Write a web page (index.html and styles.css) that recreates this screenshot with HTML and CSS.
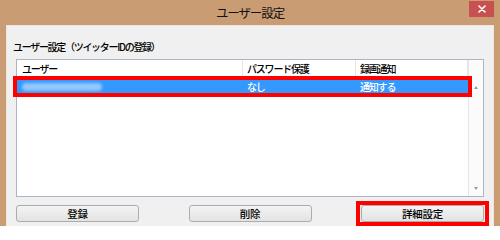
FILE: index.html
```html
<!DOCTYPE html>
<html lang="ja">
<head>
<meta charset="utf-8">
<title>ユーザー設定</title>
<link rel="stylesheet" href="styles.css">
</head>
<body>
<div class="window">
  <div class="titlebar">
    <div class="title">ユーザー設定</div>
    <div class="close">
      <svg width="8" height="8" viewBox="0 0 8 8"><path d="M1 1 L7 7 M7 1 L1 7" stroke="#fff" stroke-width="1.6" stroke-linecap="round"/></svg>
    </div>
  </div>
  <div class="content">
    <div class="group-label">ユーザー設定（ツイッターIDの登録）</div>
    <div class="list">
      <div class="list-main">
        <div class="row header">
          <div class="cell c1">ユーザー</div>
          <div class="cell c2">パスワード保護</div>
          <div class="cell c3">録画通知</div>
        </div>
        <div class="row selected">
          <div class="cell c1"><span class="blurred"></span></div>
          <div class="cell c2">なし</div>
          <div class="cell c3">通知する</div>
        </div>
      </div>
      <div class="scrollbar">
        <span class="arrow up"></span>
        <span class="arrow down"></span>
      </div>
      <div class="mark mark-row"></div>
    </div>
    <div class="buttons">
      <div class="btn">登録</div>
      <div class="btn">削除</div>
      <div class="btn marked">詳細設定<div class="mark mark-btn"></div></div>
    </div>
  </div>
</div>
</body>
</html>
```

FILE: styles.css
```css
html, body {
  margin: 0;
  padding: 0;
}
body {
  width: 500px;
  height: 226px;
  overflow: hidden;
  font-family: "Noto Sans CJK JP", "Noto Sans", sans-serif;
  color: #000;
}
.window {
  width: 500px;
  height: 226px;
  background: #c99c73;
  display: flex;
  flex-direction: column;
  box-sizing: border-box;
  padding: 0 6px 0 6px;
}
.titlebar {
  height: 25px;
  flex: none;
  position: relative;
  display: flex;
  align-items: center;
  justify-content: center;
}
.title {
  font-size: 12.5px;
  letter-spacing: -1.1px;
  color: #111;
  margin-top: -1px;
}
.close {
  position: absolute;
  right: 0;
  top: 1px;
  width: 25px;
  height: 16px;
  background: #c75050;
  display: flex;
  align-items: center;
  justify-content: center;
}
.close svg { display: block; }
.content {
  flex: 1;
  background: #f0f0f0;
  border: 1px solid #efe6dd;
  border-bottom: none;
  padding: 0 9px 0 9px;
  display: flex;
  flex-direction: column;
}
.group-label {
  font-size: 10px;
  line-height: 14px;
  letter-spacing: -1.3px;
  font-weight: 500;
  margin: 14px 0 5px -3px;
}
.list {
  position: relative;
  height: 138px;
  box-sizing: border-box;
  border: 1px solid #a9b6c6;
  background: #fff;
  display: flex;
}
.list-main {
  flex: 1;
}
.row {
  display: flex;
  font-size: 10px;
  letter-spacing: -1.2px;
  font-weight: 500;
}
.header {
  height: 18px;
  align-items: center;
}
.header .cell {
  height: 18px;
  line-height: 18px;
  border-right: 1px solid #e5e5e5;
}
.selected {
  height: 17px;
  line-height: 17px;
  background: #3399ff;
  color: #fff;
}
.cell {
  box-sizing: border-box;
  padding-left: 4px;
  overflow: hidden;
  white-space: nowrap;
}
.c1 { width: 226px; padding-left: 5px; display: flex; align-items: center; }
.c2 { width: 113px; }
.c3 { width: 112px; }
.blurred {
  display: block;
  width: 80px;
  height: 8px;
  border-radius: 4px;
  background: #94c8ff;
  filter: blur(1.5px);
}
.scrollbar {
  width: 14px;
  flex: none;
  background: #fbfbfb;
  border-left: 1px solid #e6e6e6;
  display: flex;
  flex-direction: column;
  justify-content: space-between;
  align-items: center;
  padding: 26px 0 6px;
}
.arrow {
  width: 0;
  height: 0;
  border-left: 2.5px solid transparent;
  border-right: 2.5px solid transparent;
}
.arrow.up { border-bottom: 3px solid #9a9a9a; }
.arrow.down { border-top: 3px solid #9a9a9a; }
.mark {
  position: absolute;
  border: 4px solid #ff0000;
  box-sizing: border-box;
  pointer-events: none;
}
.mark-row {
  left: -4px;
  top: 16px;
  width: 459px;
  height: 21px;
}
.buttons {
  display: flex;
  justify-content: space-between;
  margin-top: 8px;
}
.btn {
  position: relative;
  width: 123px;
  height: 17px;
  box-sizing: border-box;
  border: 1px solid #acacac;
  border-radius: 3px;
  background: linear-gradient(#f3f3f3, #e3e3e3);
  font-size: 10.5px;
  font-weight: 500;
  line-height: 15px;
  text-align: center;
  letter-spacing: -0.3px;
  color: #000;
}
.mark-btn {
  left: -6px;
  top: -5px;
  right: -6px;
  bottom: -5px;
}
```
